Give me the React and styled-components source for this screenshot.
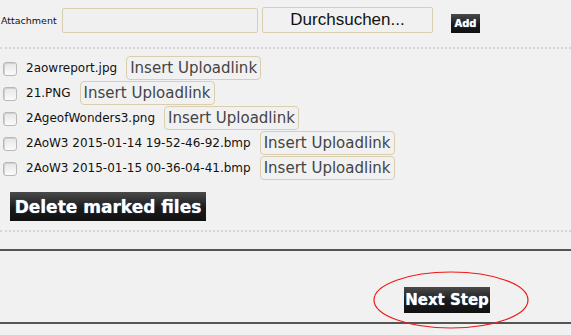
import React from "react";
import styled, { createGlobalStyle } from "styled-components";

const Global = createGlobalStyle`
  html, body {
    margin: 0;
    padding: 0;
    background: #f1f1f1;
  }
  body {
    font-family: "DejaVu Sans", Verdana, sans-serif;
  }
`;

const Page = styled.div`
  width: 571px;
  height: 335px;
  overflow: hidden;
  background: #f1f1f1;
`;

const AttachRow = styled.div`
  display: flex;
  align-items: center;
  height: 26px;
  padding: 7px 0 0 1px;
`;

const Label = styled.span`
  font-size: 9.5px;
  color: #111;
  width: 61px;
`;

const FileInput = styled.div`
  width: 194px;
  height: 23px;
  border: 1px solid #d9cfae;
  border-radius: 2px;
  background: #f0f0f0;
`;

const Browse = styled.div`
  margin-left: 4px;
  width: 169px;
  height: 24px;
  border: 1px solid #d9cfae;
  border-radius: 2px;
  display: flex;
  align-items: center;
  justify-content: center;
  font-family: "Liberation Sans", Arial, sans-serif;
  font-size: 17px;
  color: #111;
`;

const DarkButton = styled.div`
  display: inline-flex;
  align-items: center;
  justify-content: center;
  background: linear-gradient(#4a4a4a, #1a1a1a 55%, #111);
  color: #fff;
  font-family: "DejaVu Sans", Verdana, sans-serif;
  font-weight: bold;
  font-size: ${(p) => p.size}px;
  width: ${(p) => p.w}px;
  height: ${(p) => p.h}px;
  text-shadow: 0 0 1px #9cf;
`;

const AddWrap = styled.div`
  margin-left: 18px;
  margin-top: 4px;
`;

const Dotted = styled.div`
  height: 0;
  border-top: 2px dotted #d6d6d6;
  margin-top: ${(p) => p.top}px;
`;

const Solid = styled.div`
  height: 2px;
  background: #555;
  margin-top: ${(p) => p.top}px;
`;

const FileList = styled.div`
  display: flex;
  flex-direction: column;
  gap: 1px;
  margin-top: 7px;
`;

const FileRow = styled.div`
  display: flex;
  align-items: center;
  height: 24px;
  padding-left: 3px;
`;

const Check = styled.span`
  width: 12px;
  height: 12px;
  border: 1px solid #b9b9b9;
  border-radius: 3px;
  background: linear-gradient(#e6e6e6, #fbfbfb);
  box-shadow: inset 1px 1px 0 #d0d0d0;
  margin-top: 1px;
`;

const FileName = styled.span`
  margin-left: 9px;
  font-size: 12px;
  color: #111;
  white-space: nowrap;
`;

const InsertButton = styled.div`
  margin-left: 9px;
  height: 22px;
  padding: 0 3px;
  border: 1px solid #d9cfae;
  border-radius: 4px;
  display: flex;
  align-items: center;
  font-size: 15px;
  color: #444;
  white-space: nowrap;
`;

const DeleteWrap = styled.div`
  margin: 12px 0 0 10px;
`;

const Footer = styled.div`
  position: relative;
  height: 71px;
  display: flex;
  justify-content: flex-end;
  align-items: flex-end;
  padding-right: 81px;
`;

const NextWrap = styled.div`
  margin-bottom: 9px;
`;

const Ellipse = styled.svg`
  position: absolute;
  left: 373px;
  top: 20px;
  overflow: visible;
`;

const files = [
  "2aowreport.jpg",
  "21.PNG",
  "2AgeofWonders3.png",
  "2AoW3 2015-01-14 19-52-46-92.bmp",
  "2AoW3 2015-01-15 00-36-04-41.bmp",
];

export default function App() {
  return (
    <Page>
      <Global />
      <AttachRow>
        <Label>Attachment</Label>
        <FileInput />
        <Browse>Durchsuchen...</Browse>
        <AddWrap>
          <DarkButton w={29} h={19} size={10}>
            Add
          </DarkButton>
        </AddWrap>
      </AttachRow>
      <Dotted top={14} />
      <FileList>
        {files.map((f) => (
          <FileRow key={f}>
            <Check />
            <FileName>{f}</FileName>
            <InsertButton>Insert Uploadlink</InsertButton>
          </FileRow>
        ))}
      </FileList>
      <DeleteWrap>
        <DarkButton w={196} h={29} size={17}>
          Delete marked files
        </DarkButton>
      </DeleteWrap>
      <Dotted top={9} />
      <Solid top={17} />
      <Footer>
        <Ellipse width="156" height="58">
          <ellipse cx="78" cy="29" rx="77" ry="28" fill="none" stroke="#f01818" strokeWidth="1.2" />
        </Ellipse>
        <NextWrap>
          <DarkButton w={86} h={26} size={15}>
            Next Step
          </DarkButton>
        </NextWrap>
      </Footer>
      <Solid top={0} />
    </Page>
  );
}
